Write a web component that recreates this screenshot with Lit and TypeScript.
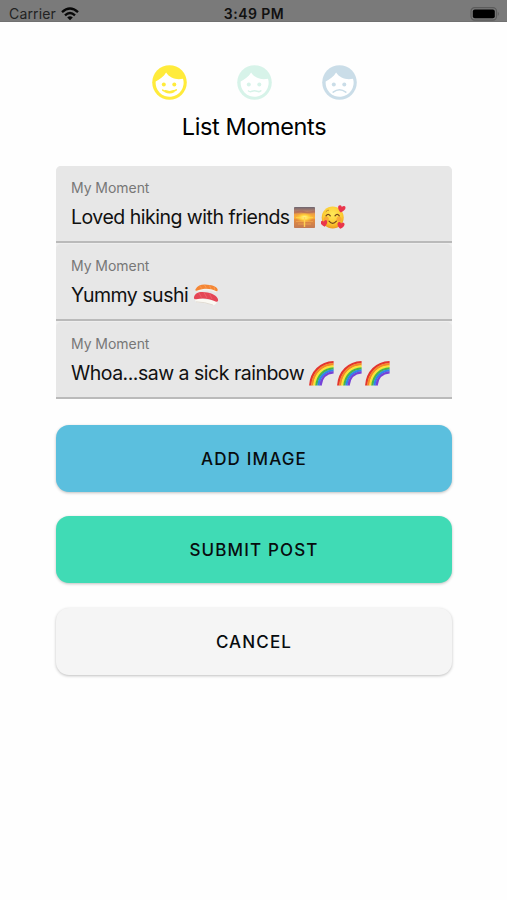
import { LitElement, html, svg, css } from "lit";
import { customElement, property } from "lit/decorators.js";

const MOUTHS: Record<string, string> = {
  happy: "M10.7 25.1Q12 26.2 13.5 25.8Q17.5 27.6 21.5 25.8Q23.2 26 24.3 24.9M13 26.5Q17.5 28.8 22 26.5",
  neutral: "M11.5 26Q13.2 27.2 15 26.2Q17.5 25.2 20 26.2Q22 27.2 23.8 25.8",
  sad: "M11.2 27.2Q17.5 22.2 23.8 27.2",
};

@customElement("mood-face")
class MoodFace extends LitElement {
  @property() mood = "happy";
  @property() color = "#000";
  static styles = css`
    :host { display: block; width: 35px; height: 35px; }
    svg { display: block; }
  `;
  render() {
    return html`<svg width="35" height="35" viewBox="0 0 35 35">
      <circle cx="17.5" cy="17.5" r="17.3" fill=${this.color} />
      <path d="M3.7 16.4C7.6 14.6 11.6 11.8 14.1 7.6C17.7 13.2 24.6 15.2 31 13.7A14 14 0 1 1 3.7 16.4Z" fill="#fff" />
      <circle cx="11.8" cy="19.4" r="2" fill=${this.color} />
      <circle cx="22.3" cy="19.4" r="2" fill=${this.color} />
      <path d=${MOUTHS[this.mood]} fill="none" stroke=${this.color} stroke-width="1.5" stroke-linecap="round" />
    </svg>`;
  }
}

const heart = (x: number, y: number, s: number, r: number) => svg`
  <path transform="translate(${x} ${y}) rotate(${r}) scale(${s})" fill="#e9354c"
    d="M0 3.6C-5 .2-4.2-3.4-2-3.4C-.8-3.4 0-2.2 0-1.8C0-2.2 .8-3.4 2-3.4C4.2-3.4 5 .2 0 3.6Z" />`;

const sunrise = html`<svg class="sun" width="21" height="21" viewBox="0 0 21 21">
  <defs>
    <linearGradient id="sky" x1="0" y1="0" x2="0" y2="1">
      <stop offset="0" stop-color="#6d6672" /><stop offset=".2" stop-color="#b98068" />
      <stop offset=".36" stop-color="#f3a13e" /><stop offset=".52" stop-color="#fbb43a" />
      <stop offset=".6" stop-color="#e68b3c" /><stop offset="1" stop-color="#c27a55" />
    </linearGradient>
    <radialGradient id="glow"><stop offset="0" stop-color="#fffbb0" /><stop offset=".45" stop-color="#ffd941" /><stop offset="1" stop-color="#ffc02e" stop-opacity="0" /></radialGradient>
  </defs>
  <rect width="21" height="21" rx=".8" fill="url(#sky)" />
  <path d="M0 4.5L8 3.6L13 5L21 3.6V5.5L13 6.5L7 5.6L0 6.5Z" fill="#a85d58" opacity=".5" />
  <path d="M2 14.5H19M4 17H17" stroke="#f2aa52" stroke-width=".7" />
  <ellipse cx="10.5" cy="10.5" rx="9" ry="5" fill="url(#glow)" />
  <path d="M10.5 10V20" stroke="#ffd254" stroke-width="1.4" />
  <path d="M2 10.7H19" stroke="#ffdc57" stroke-width=".7" />
</svg>`;

const loving = html`<svg class="love" width="25" height="25" viewBox="0 0 25 25">
  <defs><radialGradient id="skin" cx=".5" cy=".35" r=".65"><stop offset="0" stop-color="#ffe85a" /><stop offset=".65" stop-color="#fccc32" /><stop offset="1" stop-color="#ee9a20" /></radialGradient></defs>
  <circle cx="11.7" cy="12.5" r="11" fill="url(#skin)" />
  <circle cx="5.3" cy="14" r="2.5" fill="#f79038" opacity=".6" />
  <circle cx="18" cy="14" r="2.5" fill="#f79038" opacity=".6" />
  <path d="M5 10.8Q7.1 7.8 9.3 10.8M14 10.8Q16.2 7.8 18.3 10.8M8 16.2Q11.7 20.5 15.4 16.2" fill="none" stroke="#75451c" stroke-width="1.2" stroke-linecap="round" />
  <path d="M4.8 6.8Q6.2 5 8 5.2" fill="none" stroke="#b97a23" stroke-width=".8" />
  ${heart(20.5, 4, 1, 12)}${heart(3.2, 18.5, 0.9, -12)}${heart(19.8, 20.5, 0.95, 10)}
</svg>`;

const sushi = html`<svg class="sushi" width="26" height="22" viewBox="0 0 26 22">
  <path d="M3.5 5Q4 8 6 7.6Q14 4.5 23 8.6Q25 7 24.5 5Z" fill="#f6f2eb" />
  <path d="M2.5 5.2C4.5 1.6 8 .5 12 .6C18 .8 23.5 2.4 24.7 5.4C24.8 6.8 24 7.5 23 7C17 4.1 11 4 4.4 6.6C2.6 7 2.1 6.3 2.5 5.2Z" fill="#f48634" />
  <path d="M7 2.2L9 4.8M11.5 1L13.5 4.4M16.5 1.5L18 5M21 3L21.8 6" stroke="#ffa45c" stroke-width=".7" />
  <path d="M2 14Q1.6 17.5 4 18.4Q12 18.6 20 21.3Q23.8 20.5 24 17Z" fill="#fbf9f3" />
  <path d="M3 17.8Q12 18 20 21" fill="none" stroke="#d5cfc5" stroke-width=".7" />
  <path d="M1 13.2C1.8 9.8 5 8 9.5 8.1C16.5 8.2 22.5 10.5 24.8 14.7C25.8 16.8 24.5 18.4 22.5 17.5C16.5 14.6 10 13.9 3.4 15.2C1.5 15.4.7 14.6 1 13.2Z" fill="#e44555" />
  <path d="M6 9.2L8.5 13.5M11 8.5L14 14M16.5 9.6L19 15" stroke="#ee6b73" stroke-width=".7" />
</svg>`;

const BANDS = ["#e3352f", "#f58a25", "#fbe534", "#48b847", "#2e87e8", "#7542d8"];
const rainbow = html`<svg class="rainbow" width="25" height="25" viewBox="0 0 25 25">
  ${BANDS.map((c, i) => {
    const o = 1.2 + i * 2.05;
    return svg`<path d="M${o} 24.5C${o + 1} ${11 + i * 1.1} ${11.5 + i * 1.2} ${o + 0.4} 24.6 ${o}" fill="none" stroke=${c} stroke-width="2.3" />`;
  })}
</svg>`;

@customElement("moment-field")
class MomentField extends LitElement {
  static styles = css`
    :host {
      display: block; box-sizing: border-box; height: 77px; padding: 13px 15px 0;
      background: #e7e7e7; border-bottom: 2px solid #bababa; border-radius: 5px 5px 0 0;
    }
    .label { font-size: 14px; line-height: 18px; color: #777; letter-spacing: -0.05px; }
    .value { display: flex; align-items: center; height: 26px; margin-top: 7px; font-size: 19.5px; line-height: 26px; color: #111; white-space: nowrap; letter-spacing: -0.5px; }
  `;
  render() {
    return html`<div class="label">My Moment</div><div class="value"><slot></slot></div>`;
  }
}

@customElement("app-root")
class AppRoot extends LitElement {
  static styles = css`
    :host { display: block; height: 900px; overflow: hidden; background: #fefefe; color: #000; font-family: Inter, "Liberation Sans", sans-serif; }
    .status { display: grid; grid-template-columns: 1fr auto 1fr; align-items: center; height: 22px; box-sizing: border-box; padding: 5px 7px 0 9px; background: #7a7a7a; border-bottom: 1px solid #717171; font-size: 14px; line-height: 17px; }
    .carrier { display: flex; align-items: center; gap: 5px; color: #222; }
    .carrier span { letter-spacing: 0.15px; }
    .time { font-weight: 600; font-size: 14px; letter-spacing: 0.45px; padding-right: 1px; color: #111; }
    .battery { justify-self: end; }
    .status svg { display: block; }
    main { display: flex; flex-direction: column; padding: 43px 55px 0 56px; }
    .moods { display: flex; justify-content: center; gap: 50px; padding-left: 1px; }
    h1 { margin: 11px 0 0; height: 32px; font-size: 23.5px; line-height: 32px; font-weight: 400; text-align: center; letter-spacing: -0.38px; }
    .fields { display: flex; flex-direction: column; gap: 1px; margin-top: 23px; border-radius: 5px 5px 0 0; background: #eee; }
    .sun { margin-left: 4px; }
    .love { margin-left: 6px; }
    .sushi { margin-left: 5px; }
    .rainbow { margin-left: 3px; }
    .gap + .rainbow { margin-left: 0; }
    .gap { width: 5px; }
    .actions { display: flex; flex-direction: column; gap: 24.5px; margin-top: 25.5px; }
    button { display: block; height: 67px; padding: 1px 0 0; border: 0; border-radius: 13px; font: 500 17px/66px Inter, "Liberation Sans", sans-serif; letter-spacing: 1.15px; color: #080c0e; box-shadow: 0 1px 3px rgba(0,0,0,.25); }
    .add { background: #5bbfde; }
    .submit { background: #40dbb5; }
    .cancel { background: #f5f5f5; }
  `;
  render() {
    return html`
      <div class="status">
        <div class="carrier"><span>Carrier</span>
          <svg width="18" height="14" viewBox="0 0 18 14"><g fill="none" stroke="#080808" stroke-width="2.4"><path d="M1 5.1Q9-2.1 17 5.1" /><path d="M4 8.3Q9 3.8 14 8.3" /></g><path d="M6.2 10.4Q9 8.3 11.8 10.4L9 13.3Z" fill="#080808" /></svg>
        </div>
        <div class="time">3:49 PM</div>
        <svg class="battery" width="30" height="14" viewBox="0 0 30 14"><rect x="1" y=".7" width="25.5" height="12.4" rx="3.6" fill="none" stroke="#5c5c5c" stroke-width="1.2" /><rect x="2.8" y="2.5" width="22" height="8.8" rx="2" fill="#000" /><path d="M27.8 4.8Q30 6.9 27.8 9Z" fill="#5c5c5c" /></svg>
      </div>
      <main>
        <div class="moods">
          <mood-face mood="happy" color="#ffeb3b"></mood-face>
          <mood-face mood="neutral" color="#d7f3e9"></mood-face>
          <mood-face mood="sad" color="#cadde8"></mood-face>
        </div>
        <h1>List Moments</h1>
        <div class="fields">
          <moment-field><span>Loved hiking with friends</span>${sunrise}${loving}</moment-field>
          <moment-field><span>Yummy sushi</span>${sushi}</moment-field>
          <moment-field><span>Whoa...saw a sick rainbow</span><span class="gap"></span>${rainbow}${rainbow}${rainbow}</moment-field>
        </div>
        <div class="actions">
          <button class="add">ADD IMAGE</button>
          <button class="submit">SUBMIT POST</button>
          <button class="cancel">CANCEL</button>
        </div>
      </main>`;
  }
}
